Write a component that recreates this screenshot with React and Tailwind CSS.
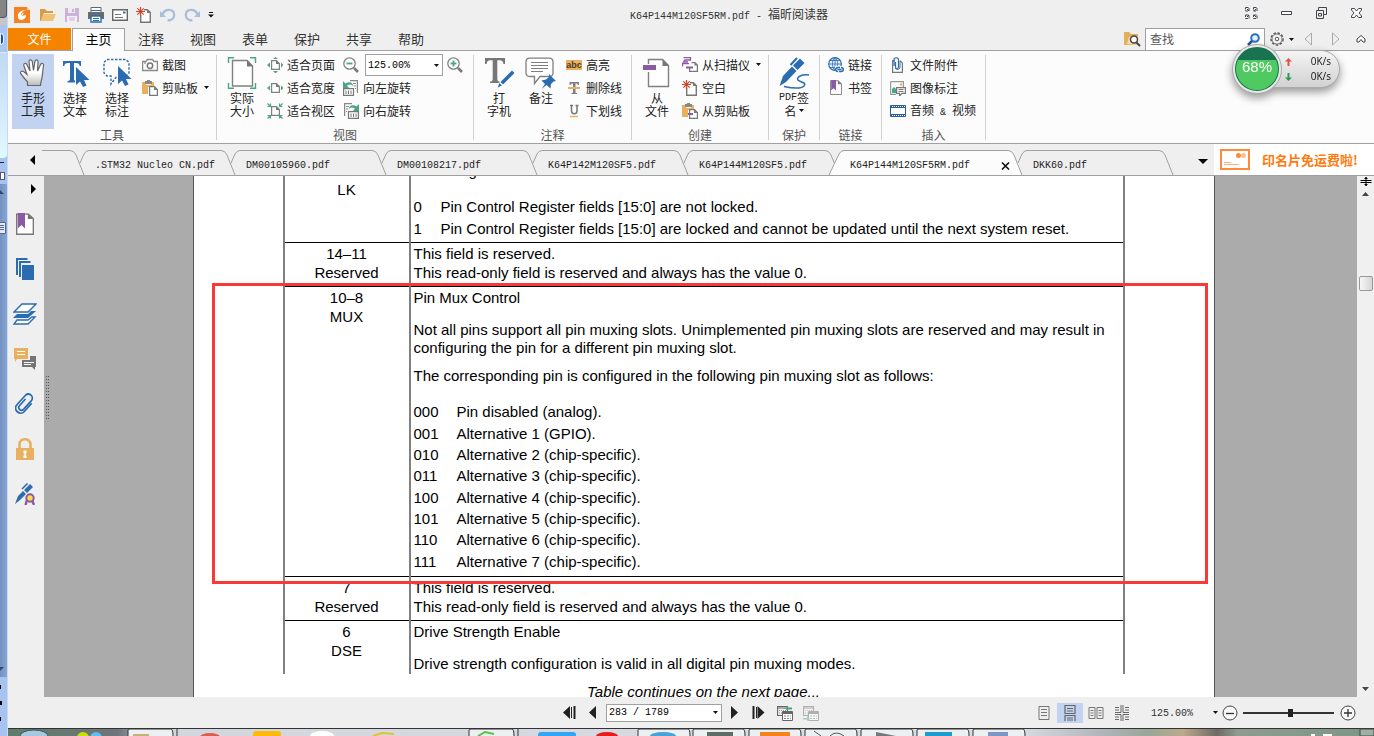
import { useState } from "react";

const BLUE = "#2b6cb0";
const GREY = "#757575";
const GREEN = "#4aa583";
const GOLD = "#e8b060";
const PURPLE = "#8a5aa5";

const Icon = ({ w = 16, h = 16, className = "", children }) => (
    <svg width={w} height={h} viewBox={`0 0 ${w} ${h}`} fill="none" className={`shrink-0 ${className}`} aria-hidden="true">
        {children}
    </svg>
);

const Latin = ({ children }) => (
    <span className="font-['Liberation_Mono',monospace] text-[10px] whitespace-pre">{children}</span>
);

const Caret = ({ className = "" }) => (
    <Icon w={5} h={3} className={className}>
        <path d="M0 0H5L2.5 3Z" fill="#111" />
    </Icon>
);

/* ---------- quick access icons ---------- */

const FoxitLogo = () => (
    <Icon className="mr-0.5">
        <path d="M0 0H13L16 3V16H0Z" fill="#f58220" />
        <path d="M13 0V3H16Z" fill="#fbd0a0" />
        <path d="M12 3C7 3 3 6 4 10C4 13 8 14 10 12C12 11 12 9 12 8L8 9L10 6C8 6 7 8 7 9C6 7 9 4 12 3Z" fill="#fff" />
    </Icon>
);

const FolderIcon = () => (
    <Icon>
        <path d="M0 14V2H5L7 4H13V6H4L1 14Z" fill="#d99b45" />
        <path d="M4 7H16L13 14H1Z" fill="#f2c172" />
    </Icon>
);

const SaveIcon = () => (
    <Icon>
        <path d="M1 1H15V15H1Z" fill="#c9b3d6" />
        <path d="M4 1H11V6H4Z" fill="#efe8f3" />
        <path d="M8 2H10V5H8Z" fill="#c9b3d6" />
        <path d="M3 9H13V15H3Z" fill="#f4eff7" />
        <path d="M5 11H11M5 13H11" stroke="#c9b3d6" />
    </Icon>
);

const PrintIcon = () => (
    <Icon>
        <path d="M3 5V0.5H13V5" stroke="#666" fill="#fff" />
        <path d="M0 5H16V12H13V9H3V12H0Z" fill="#6b6b6b" />
        <path d="M3 9H13V15H3Z" fill="#fff" stroke={BLUE} strokeWidth="1.4" />
        <path d="M5 11.5H11M5 13.5H11" stroke={BLUE} />
        <path d="M3 3.5H13" stroke={BLUE} />
    </Icon>
);

const MailIcon = () => (
    <Icon>
        <path d="M0.7 2.7H15.3V13.3H0.7Z" fill="#fff" stroke="#666" strokeWidth="1.4" />
        <path d="M11 4.5H13.5V6.5H11Z" fill={BLUE} />
        <path d="M3 7.5H9M3 10.5H11" stroke="#777" />
    </Icon>
);

const NewPageIcon = () => (
    <Icon>
        <path d="M4.7 4V15.3H14.3V5.5L11.3 2.7H8" fill="#fff" stroke="#777" strokeWidth="1.4" />
        <path d="M11 2.5V6H14.5Z" fill="#777" />
        <circle cx="4.5" cy="4.5" r="3.5" fill="#f3f0ef" />
        <path d="M4.5 0V9M0 4.5H9M1.3 1.3L7.7 7.7M7.7 1.3L1.3 7.7" stroke="#cc4a2c" strokeWidth="1.2" />
    </Icon>
);

const UndoIcon = ({ flip }) => (
    <Icon className={flip ? "-scale-x-100" : ""}>
        <path d="M2.5 7.5C4.5 1.5 14 1 14.2 8C14.2 11.5 11 13.5 7.5 13.5" stroke="#a8bfda" strokeWidth="2.3" />
        <path d="M0 4V10H6Z" fill="#a8bfda" />
    </Icon>
);

/* ---------- ribbon icons ---------- */

const HandIcon = () => (
    <Icon w={30} h={30}>
        <defs>
            <linearGradient id="palm" x1="0" y1="0" x2="0" y2="1">
                <stop offset="0.5" stopColor="#fff" />
                <stop offset="1" stopColor="#bbb" />
            </linearGradient>
        </defs>
        <path
            d="M9.500 28.500V25C6.500 22 4 18.500 2.500 16.200C2 14.700 3.800 13.500 5.500 14.600L9 17.500L5.800 8.500C5.200 6.400 7.800 5.600 8.800 7.500L12 14L11 4.500C11 2.400 13.700 2.200 14.200 4.200L15.500 13.500L17 4C17.500 2.200 20.100 2.600 20 4.600L19.500 14L22.700 7.300C23.600 5.600 26 6.500 25.500 8.500C24.700 13 24.500 18 24 21C23.700 23 22.500 25 22.500 28.500Z"
            fill="url(#palm)"
            stroke="#666"
            strokeWidth="1.200"
        />
    </Icon>
);

const Cursor = ({ x, y }) => (
    <path transform={`translate(${x} ${y})`} d="M0 0V18L4 14.500L7 20L10.500 18.500L8 13H13.500Z" fill={BLUE} />
);

const SelectTextIcon = () => (
    <Icon w={30} h={30}>
        <path d="M3 4H21V9H19.700C19.300 6.800 18.500 6 16.500 6H14V22C14 23.500 15 24 16.500 24.200V25.500H7.500V24.200C9 24 10 23.500 10 22V6H7.500C5.500 6 4.700 6.800 4.300 9H3Z" fill={BLUE} />
        <path d="M15 8L29 25L21 30L15 28Z" fill="#fcfcfc" />
        <Cursor x={16} y={10} />
    </Icon>
);

const SelectAnnotIcon = () => (
    <Icon w={30} h={30}>
        <path d="M5 2.500H24L27 5.500V16L24 19H15L9 27V19H5L2 16V5.500Z" stroke={BLUE} strokeWidth="1.400" strokeDasharray="2.500 1.500" />
        <path d="M15 7L30 23L22 30L15 27Z" fill="#fcfcfc" />
        <Cursor x={16} y={9} />
    </Icon>
);

const CameraIcon = () => (
    <Icon>
        <path d="M0.600 4.500H4L5.500 2.500H10.500L12 4.500H15.400V13.500H0.600Z" stroke="#8a8a8a" strokeWidth="1.300" />
        <circle cx="8" cy="8.700" r="2.700" stroke="#777" strokeWidth="1.500" />
        <path d="M2 6H4" stroke={GREY} />
    </Icon>
);

const ClipboardIcon = ({ purple }) => (
    <Icon>
        <path d="M0 2H4V5H9V2H12V7H6V14H0Z" fill={GOLD} />
        <path d="M3 1H5V0H8V1H10V4H3Z" fill="#888" />
        <path d="M7.600 6.600H12.500L15.400 9.500V15.400H7.600Z" fill="#fff" stroke="#777" strokeWidth="1.200" />
        <path d="M12 6.500V10H15.500Z" fill="#777" />
        {purple && <path d="M6 10H11V12H6Z" fill={PURPLE} />}
    </Icon>
);

const ActualSizeIcon = () => (
    <Icon w={30} h={32}>
        <path d="M1.500 6V0.700H7M23 0.700H28.500V6M28.500 26V31.300H23M7 31.300H1.500V26" stroke={GREEN} strokeWidth="1.400" />
        <path d="M5.500 3.500H20L25.500 9V29H5.500Z" fill="#fff" stroke="#808080" strokeWidth="1.400" />
        <path d="M20 3V9.500H26Z" fill="#777" />
    </Icon>
);

const FitIcon = ({ mode }) => (
    <Icon>
        <path d="M4.600 3.600H9.500L12.400 6.500V12.400H4.600Z" fill="#fff" stroke="#808080" strokeWidth="1.200" />
        <path d="M9 3.500V7H12.500Z" fill="#777" />
        {mode !== "area" && <path d="M3 5.500V10.500L0 8ZM14 5.500V10.500L16.500 8Z" fill={GREEN} />}
        {mode === "page" && <path d="M6 2H11L8.500 0ZM6 14H11L8.500 16.500Z" fill={GREEN} />}
        {mode === "area" && (
            <path d="M0.500 0.500L3 3M3.500 0.500V3.500H0.500M15.500 0.500L13 3M12.500 0.500V3.500H15.500M0.500 15.500L3 13M3.500 15.500V12.500H0.500M15.500 15.500L13 13M12.500 15.500V12.500H15.500" stroke={GREEN} strokeWidth="1.200" />
        )}
    </Icon>
);

const ZoomIcon = ({ plus }) => (
    <Icon>
        <circle cx="6.500" cy="6.500" r="5.700" fill="#fff" stroke="#808080" strokeWidth="1.300" />
        <path d="M11 11L15 15" stroke="#777" strokeWidth="2.500" />
        <path d="M3.500 6.500H9.500" stroke={GREEN} strokeWidth="1.800" />
        {plus && <path d="M6.500 3.500V9.500" stroke={GREEN} strokeWidth="1.800" />}
    </Icon>
);

const RotateIcon = ({ flip }) => (
    <Icon className={flip ? "-scale-x-100" : ""}>
        <path d="M7 0.600H14.400V13" stroke="#888" strokeWidth="1.200" />
        <path d="M10 3.500H13M11 6H13M12 8.500H13" stroke="#888" />
        <path d="M0.600 8.600H10.500V15.400H0.600Z" fill="#fff" stroke="#777" strokeWidth="1.200" />
        <path d="M3 10.500V14M5.500 10.500V14M8 10.500V14" stroke="#777" />
        <path d="M0 1V8H6L4 5.500C7 3.500 9 4.500 10.500 6.500C10 2.500 6 1 2.500 3.500Z" fill={GREEN} />
    </Icon>
);

const TypewriterIcon = () => (
    <Icon w={32} h={32}>
        <path d="M2 1H22V7H20.500C20 4.500 19 3.300 17 3.300H14.300V22C14.300 24 15.500 24.500 17 24.700V26H7V24.700C8.500 24.500 9.700 24 9.700 22V3.300H7C5 3.300 4 4.500 3.500 7H2Z" fill="#777" />
        <path d="M29 13L32 16L20 28L14.500 31L16.500 25Z" fill="#fcfcfc" />
        <path d="M29 13.500L31.500 16L20 27.500L17.500 25ZM16.500 26L19 28.500L14.500 30.500Z" fill={BLUE} />
    </Icon>
);

const NoteIcon = () => (
    <Icon w={32} h={32}>
        <path d="M5 1.200H24Q28 1.200 28 5V16Q28 19.500 24 19.500H15L9.500 26.500V19.500H5Q1 19.500 1 16V5Q1 1.200 5 1.200Z" fill="#fff" stroke="#808080" strokeWidth="1.300" />
        <path d="M6 5.500H23M6 8.500H23M6 11.500H23M6 14.500H18" stroke="#808080" />
        <path d="M24 17L31 24L28.500 24.500L26 27L25.500 31.500L21.500 28L16.500 32L20 27L16.500 23.500L21 22.500L24 20Z" fill={BLUE} />
    </Icon>
);

const HighlightIcon = () => (
    <Icon>
        <path d="M0 3H16V13H0Z" fill={GOLD} />
        <text x="8" y="11" textAnchor="middle" fontSize="9" fontWeight="700" fontFamily="Liberation Sans, sans-serif" fill="#4a3d28">abc</text>
    </Icon>
);

const StrikeIcon = () => (
    <Icon>
        <path d="M3.500 2H13V5H12C11.500 3.500 11 3.500 9.500 3.500V12C9.500 13 10 13 11 13V14H5.500V13C6.500 13 7 13 7 12V3.500C5.500 3.500 5 3.500 4.500 5H3.500Z" fill="#808080" />
        <path d="M2 7H14V9H2Z" fill={GOLD} />
    </Icon>
);

const UnderlineIcon = () => (
    <Icon>
        <path d="M4 2.500H7M9.500 2.500H12.500M5.500 2.500V8C5.500 11.500 11 11.500 11 8V2.500" stroke="#777" strokeWidth="1.500" />
        <path d="M4 13.500H12" stroke={GOLD} strokeWidth="1.500" />
    </Icon>
);

const FromFileIcon = () => (
    <Icon w={28} h={32}>
        <path d="M5.500 2.500H19.500L25.500 8.500V29.500H5.500Z" fill="#fff" stroke="#808080" strokeWidth="1.400" />
        <path d="M19.500 2V9H26Z" fill="#777" />
        <path d="M4 7H14V15H4Z" fill="#fcfcfc" />
        <path d="M0 8H13V13H0Z" fill={PURPLE} />
    </Icon>
);

const ScannerIcon = () => (
    <Icon>
        <path d="M9.600 5.600H13L15.400 8V14.400H7.600V10" stroke="#777" strokeWidth="1.200" />
        <path d="M12.500 5.500V8.500H15.500Z" fill="#777" />
        <path d="M1.500 0.700H8.500V3H3L1.500 5H6M0.500 9.500V6.700H7" stroke={PURPLE} strokeWidth="1.300" />
        <path d="M4 9.500H11V11.500H4Z" fill={PURPLE} />
    </Icon>
);

const SignIcon = () => (
    <Icon w={32} h={32}>
        <path d="M22 1.500L26.500 6L19.500 13L15 8.500ZM14 9.500L18.500 14L8 25L1.500 29L5 19Z" fill={BLUE} />
        <path d="M12.500 8L19 1" stroke={BLUE} strokeWidth="2" />
        <path d="M31 18C24 17 18 20 20 23C22 25.500 29 25 26 29C23 32 13 31 6 29.500" stroke={BLUE} strokeWidth="1.500" />
    </Icon>
);

const GlobeLinkIcon = () => (
    <Icon>
        <circle cx="7" cy="7" r="6.300" stroke={BLUE} strokeWidth="1.200" fill="#eaf2fa" />
        <path d="M0.500 7H13.500M7 0.500V13.500M2 3.500H12M2 10.500H12M7 0.500C3.500 4 3.500 10 7 13.500M7 0.500C10.500 4 10.500 10 7 13.500" stroke={BLUE} strokeWidth="0.800" />
        <path d="M7 9H16V16H7Z" fill="#fcfcfc" />
        <path d="M10 14.500C7 14.500 7 10.500 10 10.500H12M13 10.500C16 10.500 16 14.500 13 14.500H11M9.500 12.500H13.500" stroke={BLUE} strokeWidth="1.500" />
    </Icon>
);

const BookmarkPageIcon = ({ w = 16, h = 16 }) => (
    <svg width={w} height={h} viewBox="0 0 16 20" fill="none" preserveAspectRatio="none" aria-hidden="true">
        <path d="M0.600 1H11L15.400 5V19.300H0.600Z" fill="#fff" stroke="#777" strokeWidth="1.200" />
        <path d="M10.500 0.500V5.500H15.800Z" fill="#777" />
        <path d="M1.500 0H8V14L4.800 11L1.500 14Z" fill={PURPLE} />
    </svg>
);

const AttachIcon = () => (
    <Icon>
        <path d="M5 3.600H2.600V15.400H12.400V6L10 3.600" fill="#fff" stroke="#777" strokeWidth="1.200" />
        <path d="M5.500 5V10C5.500 12 8.500 12 8.500 10V3C8.500 0 4 0 4 3V9" stroke={BLUE} strokeWidth="1.200" />
        <path d="M10 4V10C10 13 6 13 5 11" stroke={BLUE} />
    </Icon>
);

const ImageAnnotIcon = () => (
    <Icon>
        <path d="M0.600 1.600H13.400V7M6 14.400H0.600V1.600" stroke="#999" strokeWidth="1.200" />
        <path d="M2 13V9L4 7L7 10V13Z" fill={GREEN} />
        <circle cx="11" cy="4.500" r="1.200" fill={GOLD} />
        <path d="M6.600 7.600H15.400V13.400H12L9.500 16V13.400H6.600Z" fill="#fff" stroke="#777" strokeWidth="1.200" />
        <path d="M8.500 9.500H13.500M8.500 11.500H13.500" stroke="#777" />
    </Icon>
);

const FilmIcon = () => (
    <Icon>
        <path d="M0.500 2.500H15.500V13.500H0.500Z" fill="#fff" stroke="#2a5f9e" />
        <path d="M1 3.500H15M1 12.500H15" stroke="#2a5f9e" strokeDasharray="1 1" />
        <path d="M1 4.500H15M1 11.500H15" stroke="#2a5f9e" />
    </Icon>
);

/* ---------- title bar ---------- */

const quickIcons = [
    ["打开", <FolderIcon />],
    ["保存", <SaveIcon />],
    ["打印", <PrintIcon />],
    ["邮件", <MailIcon />],
    ["新建", <NewPageIcon />],
    ["撤销", <UndoIcon />],
    ["重做", <UndoIcon flip />],
];

const TitleBar = () => (
    <header className="flex h-7 shrink-0 items-center pt-0.5 pr-2.5 pl-1.5">
        <div className="flex flex-1 items-center gap-2">
            <FoxitLogo />
            {quickIcons.map(([label, icon]) => (
                <button key={label} aria-label={label}>{icon}</button>
            ))}
            <button aria-label="自定义快速访问工具栏">
                <Icon w={6} h={6}>
                    <path d="M1 0.500H5" stroke="#111" />
                    <path d="M0 2.500H6L3 5.500Z" fill="#111" />
                </Icon>
            </button>
        </div>
        <h1 className="pb-0.5 pl-20 text-[12px] whitespace-nowrap text-[#333]">
            <Latin>K64P144M120SF5RM.pdf - </Latin>福昕阅读器
        </h1>
        <div className="flex flex-1 justify-end gap-5 pb-1">
            <button aria-label="全屏">
                <Icon w={15} h={14}>
                    <path d="M1.500 1.500H5V5H1.500ZM9.500 1.500H13V5H9.500ZM1.500 9H5V12.500H1.500ZM9.500 9H13V12.500H9.500Z" stroke="#44444f" strokeDasharray="3 1" />
                    <path d="M3 3L5 5M12 3L10 5M3 11L5 9M12 11L10 9" stroke="#44444f" />
                </Icon>
            </button>
            <button aria-label="最小化">
                <Icon w={15} h={14}>
                    <path d="M2.500 5.500H12.500V8.500H2.500Z" stroke="#44444f" fill="#fff" />
                </Icon>
            </button>
            <button aria-label="还原">
                <Icon w={15} h={14}>
                    <path d="M4.500 4V1.500H12.500V8.500H10M2.500 4.500H9.500V12.500H2.500ZM4.500 7.500H7.500V10H4.500Z" stroke="#44444f" />
                </Icon>
            </button>
            <button aria-label="关闭">
                <Icon w={15} h={14}>
                    <path d="M2.500 2.500H5.500L7.500 5L9.500 2.500H12.500V4L10 7L12.500 10V11.500H9.500L7.500 9L5.500 11.500H2.500V10L5 7L2.500 4Z" stroke="#44444f" fill="#fff" />
                </Icon>
            </button>
        </div>
    </header>
);

const menuTabs = ["注释", "视图", "表单", "保护", "共享", "帮助"];

const MenuBar = () => (
    <nav className="flex h-[23px] shrink-0 items-stretch border-b border-[#a0a0a0]">
        <button className="w-[63px] bg-[#f48400] text-[12px] text-white">文件</button>
        <button className="-mb-px ml-px w-[53px] border border-b-0 border-[#a0a0a0] bg-[#fcfcfc] pb-0.5 text-[13px] leading-5 text-black">主页</button>
        {menuTabs.map((tab) => (
            <button key={tab} className="w-[52px] text-[13px] text-[#333]">{tab}</button>
        ))}
        <div className="ml-auto flex items-center">
            <Icon w={17} className="mr-1">
                <path d="M0 14V1H5L7 3H14V14Z" fill="#e5b05c" />
                <path d="M3 13L5 6H14V14Z" fill="#f7dca8" />
                <circle cx="10" cy="8.500" r="3.500" fill="#fff" stroke="#444" strokeWidth="1.500" />
                <path d="M12.500 11.500L16 15" stroke="#444" strokeWidth="2" />
            </Icon>
            <label className="flex h-[23px] w-[120px] items-center border border-[#a0a0a0] bg-white px-1">
                <input className="w-full min-w-0 bg-transparent text-[12px] text-[#333] outline-none placeholder:text-[#555]" placeholder="查找" aria-label="查找" />
                <Icon w={13} h={13}>
                    <circle cx="8" cy="5" r="3.800" fill="#e3f0fc" stroke="#2c6fc0" strokeWidth="2" />
                    <path d="M5 8L1 12" stroke="#254f9c" strokeWidth="2.500" />
                </Icon>
            </label>
            <button className="ml-1 flex items-center gap-1" aria-label="设置">
                <Icon>
                    <circle cx="8" cy="8" r="6" stroke="#555" strokeWidth="1.500" strokeDasharray="2.500 1.500" />
                    <circle cx="8" cy="8" r="5" stroke="#777" fill="#f5f5f5" />
                    <circle cx="8" cy="8" r="1.800" stroke="#555" />
                </Icon>
                <Caret />
            </button>
            <button className="ml-2.5" aria-label="上一个">
                <Icon w={8} h={14}><path d="M7.500 1V13L1 7Z" stroke="#aaa" /></Icon>
            </button>
            <button className="ml-5" aria-label="下一个">
                <Icon w={8} h={14}><path d="M0.500 1V13L7 7Z" stroke="#aaa" /></Icon>
            </button>
            <button className="mr-2 ml-4" aria-label="折叠功能区">
                <Icon w={10} h={10}><path d="M1 5L5 1.500L9 5V8H7L5 5.500L3 8H1Z" stroke="#444" fill="#fff" /></Icon>
            </button>
        </div>
    </nav>
);

/* ---------- ribbon ---------- */

const Group = ({ label, className, wide, children }) => (
    <section className={`flex h-[85px] flex-col border-r border-[#d0d0d0] ${className}`}>
        <div className={`-mt-px flex h-[75px] shrink-0 ${wide ? "pl-2" : "pl-1"}`}>{children}</div>
        <h2 className="text-center text-[12px] leading-3 text-[#555]">{label}</h2>
    </section>
);

const BigButton = ({ icon, lines, className = "" }) => (
    <button className={`flex h-[75px] w-[42px] shrink-0 flex-col items-center pt-[3px] text-[12px] leading-[13px] ${className}`}>
        <span className="flex h-[34px] items-start">{icon}</span>
        {lines.map((line, i) => (
            <span key={i} className="flex items-center whitespace-nowrap">{line}</span>
        ))}
    </button>
);

const SmallButton = ({ icon, children, caret }) => (
    <button className="flex h-[23px] items-center gap-1 pb-0.5 text-[12px] whitespace-nowrap">
        {icon}
        <span>{children}</span>
        {caret && <Caret className="ml-0.5" />}
    </button>
);

const Ribbon = () => (
    <div className="flex h-[93px] shrink-0 items-start border-b border-[#a0a0a0] bg-[#fcfcfc] pt-1">
        <Group label="工具" className="w-[209px]">
            <BigButton icon={<HandIcon />} lines={["手形", "工具"]} className="bg-[#c1d3f1]" />
            <BigButton icon={<SelectTextIcon />} lines={["选择", "文本"]} />
            <BigButton icon={<SelectAnnotIcon />} lines={["选择", "标注"]} />
            <div className="ml-1">
                <SmallButton icon={<CameraIcon />}>截图</SmallButton>
                <SmallButton icon={<ClipboardIcon />} caret>剪贴板</SmallButton>
            </div>
        </Group>
        <Group label="视图" className="w-[257px]">
            <BigButton icon={<ActualSizeIcon />} lines={["实际", "大小"]} />
            <div className="ml-1">
                <SmallButton icon={<FitIcon mode="page" />}>适合页面</SmallButton>
                <SmallButton icon={<FitIcon />}>适合宽度</SmallButton>
                <SmallButton icon={<FitIcon mode="area" />}>适合视区</SmallButton>
            </div>
            <div className="ml-2">
                <div className="flex h-[23px] items-center pb-px">
                    <button aria-label="缩小"><ZoomIcon /></button>
                    <div className="relative ml-1.5 flex items-center">
                        <select aria-label="缩放比例" className="h-[22px] w-[78px] appearance-none border border-[#a0a0a0] bg-white px-0.5 font-['Liberation_Mono',monospace] text-[10px] text-black">
                            <option>125.00%</option>
                        </select>
                        <Caret className="pointer-events-none absolute right-1" />
                    </div>
                    <button className="ml-1" aria-label="放大"><ZoomIcon plus /></button>
                </div>
                <SmallButton icon={<RotateIcon />}>向左旋转</SmallButton>
                <SmallButton icon={<RotateIcon flip />}>向右旋转</SmallButton>
            </div>
        </Group>
        <Group label="注释" className="w-[158px]">
            <BigButton icon={<TypewriterIcon />} lines={["打", "字机"]} />
            <BigButton icon={<NoteIcon />} lines={["备注"]} />
            <div className="ml-1">
                <SmallButton icon={<HighlightIcon />}>高亮</SmallButton>
                <SmallButton icon={<StrikeIcon />}>删除线</SmallButton>
                <SmallButton icon={<UnderlineIcon />}>下划线</SmallButton>
            </div>
        </Group>
        <Group label="创建" className="w-[137px]">
            <BigButton icon={<FromFileIcon />} lines={["从", "文件"]} />
            <div className="ml-1">
                <SmallButton icon={<ScannerIcon />} caret>从扫描仪</SmallButton>
                <SmallButton icon={<NewPageIcon />}>空白</SmallButton>
                <SmallButton icon={<ClipboardIcon purple />}>从剪贴板</SmallButton>
            </div>
        </Group>
        <Group label="保护" className="w-[51px]">
            <BigButton
                icon={<SignIcon />}
                lines={[<><Latin>PDF</Latin>签</>, <>名<Caret className="ml-0.5" /></>]}
            />
        </Group>
        <Group label="链接" className="w-[62px]" wide>
            <div>
                <SmallButton icon={<GlobeLinkIcon />}>链接</SmallButton>
                <SmallButton icon={<span className="flex w-4 justify-center"><BookmarkPageIcon w={12} h={15} /></span>}>书签</SmallButton>
            </div>
        </Group>
        <Group label="插入" className="w-[104px]" wide>
            <div>
                <SmallButton icon={<AttachIcon />}>文件附件</SmallButton>
                <SmallButton icon={<ImageAnnotIcon />}>图像标注</SmallButton>
                <SmallButton icon={<FilmIcon />}>音频<Latin> &amp; </Latin>视频</SmallButton>
            </div>
        </Group>
    </div>
);

/* ---------- document tabs ---------- */

const docs = [
    ".STM32 Nucleo CN.pdf",
    "DM00105960.pdf",
    "DM00108217.pdf",
    "K64P142M120SF5.pdf",
    "K64P144M120SF5.pdf",
    "K64P144M120SF5RM.pdf",
    "DKK60.pdf",
];

const DocTab = ({ name, active, onSelect }) => {
    const w = active ? 183 : 151;
    return (
        <div className={`relative flex h-[25px] shrink-0 items-center ${active ? "z-10 w-[183px]" : "w-[151px]"}`}>
            <svg width={w + 5} height="25" className="absolute top-0 left-0 overflow-visible" fill="none" aria-hidden="true">
                <path
                    d={`M${active ? "-6 25L4 4" : "0 13L4 4"}Q6 0.500 9 0.500H${w - 10}Q${w - 6} 0.500 ${w - 4} 5L${w + 4} 25`}
                    stroke="#a0a0a0"
                    fill={active ? "#fcfcfc" : "none"}
                />
            </svg>
            <button onClick={onSelect} className="relative flex-1 pt-0.5 pl-[15px] text-left text-[#222]">
                <Latin>{name}</Latin>
            </button>
            {active && (
                <button className="relative mr-2 pt-1.5" aria-label="关闭标签">
                    <Icon w={9} h={8}><path d="M1 0.500L8 7.500M8 0.500L1 7.500" stroke="#111" strokeWidth="1.600" /></Icon>
                </button>
            )}
        </div>
    );
};

const DocTabs = () => {
    const [current, setCurrent] = useState(5);
    return (
        <div className="flex h-8 shrink-0 border-b border-[#a0a0a0]">
            <button className="flex w-[34px] items-center justify-end pr-[7px]" aria-label="向左滚动">
                <Icon w={5} h={10}><path d="M5 0V10L0 5Z" fill="#000" /></Icon>
            </button>
            <div className="flex min-w-0 flex-1 items-end overflow-hidden">
                <svg width="38" height="25" className="shrink-0 overflow-visible" fill="none" aria-hidden="true">
                    <path d="M0 0.500H28Q32 0.500 34 5L42 25" stroke="#a0a0a0" />
                </svg>
                {docs.map((name, i) => (
                    <DocTab key={name} name={name} active={i === current} onSelect={() => setCurrent(i)} />
                ))}
            </div>
            <button className="flex w-5 items-center" aria-label="所有标签">
                <Icon w={10} h={5} className="mt-1 ml-1"><path d="M0 0H10L5 5Z" fill="#000" /></Icon>
            </button>
            <a href="#card" className="flex w-[160px] shrink-0 items-center gap-3 bg-white pl-1.5 text-[13px] font-bold whitespace-nowrap text-[#ff7a0d]">
                <Icon w={30} h={21}>
                    <path d="M1 1H29V20H1Z" stroke="#ff8a3c" strokeWidth="2" />
                    <circle cx="18.500" cy="6.500" r="2.500" fill="#ff8a3c" />
                    <circle cx="23.500" cy="6.500" r="2.500" fill="#ffbf91" />
                    <path d="M4 13.500H11M4 15.500H19" stroke="#ffb27c" />
                </Icon>
                印名片免运费啦!
            </a>
        </div>
    );
};

/* ---------- left panel ---------- */

const panelIcons = [
    ["书签", <BookmarkPageIcon w={18} h={22} />],
    [
        "页面",
        <Icon w={20} h={22}>
            <path d="M2 17V1H12.500M5 19V4H15.500" stroke={BLUE} strokeWidth="2" />
            <path d="M7 7H19V22H7Z" fill={BLUE} />
        </Icon>,
    ],
    [
        "图层",
        <Icon w={24} h={22}>
            <path d="M9 1H23L15 9H1Z" fill="#fff" stroke={BLUE} strokeWidth="1.400" />
            <path d="M18 8H23L15 15H0L4 11H15Z" fill={BLUE} />
            <path d="M4 17L1 21H15L22 14H19L15 17Z" fill="#fff" stroke={BLUE} strokeWidth="1.400" />
        </Icon>,
    ],
    [
        "注释",
        <Icon w={22} h={22}>
            <path d="M0 0H14V11H3L1 14V11H0Z" fill={GOLD} />
            <path d="M3 3.500H11M3 6.500H11" stroke="#fff" />
            <path d="M16 8H22V19H21V22L18 19H8V12H16Z" fill="#757575" />
            <path d="M10 14.500H20M10 16.500H17" stroke="#fff" />
        </Icon>,
    ],
    [
        "附件",
        <Icon w={20} h={22}>
            <g transform="rotate(42 10 11)" stroke={BLUE} strokeWidth="1.700">
                <path d="M7 7V16C7 19.500 12.500 19.500 12.500 16V4.500C12.500 -1 4.500 -1 4.500 4.500V17C4.500 23.500 14.500 23.500 14.500 17V6" />
            </g>
        </Icon>,
    ],
    [
        "安全",
        <Icon w={18} h={22}>
            <path d="M3.500 11V6.500C3.500 -0.500 14.500 -0.500 14.500 6.500V11" stroke={GOLD} strokeWidth="2.600" />
            <path d="M0 10H18V22H0Z" fill={GOLD} />
            <path d="M7.500 12.500H10.500V15.500H9.800V17.500H10.500V20H7.500V17.500H8.200V15.500H7.500Z" fill="#fff" />
        </Icon>,
    ],
    [
        "签名",
        <Icon w={20} h={22}>
            <path d="M15 1L18 4L12 10L9 7ZM8 8L11 11L5 17L0 21L3 13Z" fill={BLUE} />
            <path d="M7 6L12.500 0.500" stroke={BLUE} strokeWidth="1.600" />
            <path d="M12 17L10.500 22M17 17L19 22" stroke={PURPLE} strokeWidth="2.500" />
            <circle cx="15" cy="15" r="3.700" fill="#ffd84d" stroke={PURPLE} strokeWidth="2" />
        </Icon>,
    ],
];

const SidePanel = () => (
    <aside className="flex w-9 shrink-0 flex-col">
        <button className="flex h-[25px] items-center justify-end pr-2" aria-label="展开面板">
            <Icon w={5} h={10}><path d="M0 0V10L5 5Z" fill="#000" /></Icon>
        </button>
        {panelIcons.map(([label, icon]) => (
            <button key={label} aria-label={label} className="flex h-[45px] items-center justify-center pr-0.5">
                {icon}
            </button>
        ))}
    </aside>
);

/* ---------- pdf page ---------- */

const muxSlots = [
    ["000", "Pin disabled (analog)."],
    ["001", "Alternative 1 (GPIO)."],
    ["010", "Alternative 2 (chip-specific)."],
    ["011", "Alternative 3 (chip-specific)."],
    ["100", "Alternative 4 (chip-specific)."],
    ["101", "Alternative 5 (chip-specific)."],
    ["110", "Alternative 6 (chip-specific)."],
    ["111", "Alternative 7 (chip-specific)."],
];

const Row = ({ bits, name, last, children }) => (
    <tr className={last ? "" : "border-b border-black"}>
        <th className="w-[126px] border-x-2 border-[#808080] p-0 pt-px text-center align-top font-normal">
            {bits}
            <br />
            {name}
        </th>
        <td className="border-r-2 border-[#808080] p-0 pt-px pl-[3px] align-top">{children}</td>
    </tr>
);

const Reserved = () => (
    <p className="pb-1">
        This field is reserved.
        <br />
        This read-only field is reserved and always has the value 0.
    </p>
);

const PdfPage = () => (
    <div className="relative w-[1022px] shrink-0 overflow-hidden border-x border-[#555] bg-white px-[89px] font-['Liberation_Sans',sans-serif] text-[15px] leading-[19px] text-black">
        <table className="-mt-4 w-full border-collapse">
            <tbody>
                <Row bits="15" name="LK">
                    <p>Lock Register</p>
                    <dl className="mt-4 grid grid-cols-[27px_1fr] pb-0.5 leading-[22px]">
                        <dt>0</dt>
                        <dd>Pin Control Register fields [15:0] are not locked.</dd>
                        <dt>1</dt>
                        <dd>Pin Control Register fields [15:0] are locked and cannot be updated until the next system reset.</dd>
                    </dl>
                </Row>
                <Row bits="14–11" name="Reserved"><Reserved /></Row>
                <Row bits="10–8" name="MUX">
                    <p>Pin Mux Control</p>
                    <p className="mt-3.5 leading-[18px]">
                        Not all pins support all pin muxing slots. Unimplemented pin muxing slots are reserved and may result in
                        configuring the pin for a different pin muxing slot.
                    </p>
                    <p className="mt-[9px]">The corresponding pin is configured in the following pin muxing slot as follows:</p>
                    <dl className="mt-4 mb-1 grid h-[171px] auto-rows-fr grid-cols-[43px_1fr] items-center">
                        {muxSlots.map(([code, text]) => (
                            <div key={code} className="contents">
                                <dt>{code}</dt>
                                <dd>{text}</dd>
                            </div>
                        ))}
                    </dl>
                </Row>
                <Row bits="7" name="Reserved"><Reserved /></Row>
                <Row bits="6" name="DSE" last>
                    <p>Drive Strength Enable</p>
                    <p className="mt-[13px] pb-px">Drive strength configuration is valid in all digital pin muxing modes.</p>
                </Row>
            </tbody>
        </table>
        <p className="mt-2 text-center italic">Table continues on the next page...</p>
        <div className="absolute top-[107px] right-1.5 left-[18px] h-[301px] border-3 border-[#f93838]" />
    </div>
);

const Scrollbar = () => (
    <div className="flex w-[17px] shrink-0 flex-col items-center bg-[#f0f0f0] pt-px pb-1.5">
        <Icon w={12} h={9}>
            <path d="M0.500 3.500H11.500M0.500 5.500H11.500M6 0V9" stroke="#000" />
            <path d="M4 2H8L6 0ZM4 7H8L6 9Z" fill="#000" />
        </Icon>
        <Icon w={7} h={4} className="mt-1.5"><path d="M0 4H7L3.500 0Z" fill="#444" /></Icon>
        <div className="mt-20 h-[15px] w-3.5 rounded-xs border border-[#999] bg-linear-to-r from-[#f8f8f8] to-[#d5d5d5]" />
        <Icon w={7} h={4} className="mt-auto"><path d="M0 0H7L3.500 4Z" fill="#444" /></Icon>
    </div>
);

/* ---------- status bar ---------- */

const NavArrow = ({ label, d, w = 8 }) => (
    <button aria-label={label}>
        <Icon w={w} h={13}><path d={d} fill="#222" /></Icon>
    </button>
);

const ViewHistoryIcon = ({ faded }) => (
    <Icon className={faded ? "opacity-45" : ""}>
        <path d="M0.500 1.500H10.500V10.500H0.500ZM0.500 3H10" stroke="#666" strokeWidth="1.200" />
        <path d="M2 5.500H9M2 8H6" stroke="#999" strokeDasharray="1 1" />
        <path d="M5.500 6.500H15.500V15.500H5.500Z" fill="#fff" stroke="#666" />
        <path d="M5.500 8H15.500" stroke="#666" strokeWidth="2" />
        <path d="M7 11H14M7 13.500H14" stroke="#888" strokeDasharray="2 1" />
        {faded ? <path d="M0 13H4V11L7 14L4 16V14.500H0Z" fill={GREEN} /> : <path d="M15 2.500H11V0.500L8 3.500L11 6V4.500H15Z" fill={GREEN} />}
    </Icon>
);

const layoutIcons = [
    ["单页", <path d="M3 1.500H13V14.500H3ZM5 4.500H11M5 7.500H11M5 10.500H11" stroke="#777" />],
    ["连续", <path d="M3 0V8.500H13V0.500H3M5 3.500H11M5 6H11M3 16V10.500H13V16M5 13H11M5 15H11" stroke="#666" strokeWidth="1.200" />],
    ["双页", <path d="M1 2.500H7V13.500H1ZM9 2.500H15V13.500H9ZM2.500 5.500H5.500M2.500 8H5.500M2.500 10.500H5.500M10.500 5.500H13.500M10.500 8H13.500M10.500 10.500H13.500" stroke="#777" />],
    ["连续双页", <path d="M1 7.500H7V0M9 0V7.500H15M1 9.500H7V16M9 16V9.500H15M1 2.500H5M1 5H5M11 2.500H15M11 5H15M1 12H5M1 14.500H5M11 12H15M11 14.500H15" stroke="#666" />],
];

const StatusBar = () => {
    const [zoom, setZoom] = useState(52);
    return (
        <footer className="grid h-[31px] shrink-0 grid-cols-[1fr_auto_1fr] items-center">
            <span />
            <div className="flex items-center">
                <NavArrow label="第一页" w={13} d="M7 0V13L0 6.500ZM8 1L8 12L9 12V1ZM10.500 0H12.500V13H10.500Z" />
                <span className="w-3" />
                <NavArrow label="上一页" d="M8 0V13L1 6.500Z" />
                <div className="relative mr-2 ml-2.5 flex items-center">
                    <select aria-label="页码" className="h-[18px] w-[116px] appearance-none border border-[#a0a0a0] bg-white px-0.5 font-['Liberation_Mono',monospace] text-[10px] text-black">
                        <option>283 / 1789</option>
                    </select>
                    <Caret className="pointer-events-none absolute right-1" />
                </div>
                <NavArrow label="下一页" d="M1 0V13L8 6.500Z" />
                <span className="w-3.5" />
                <NavArrow label="最后一页" w={13} d="M0.500 0H2.500V13H0.500ZM4 1H5V12H4ZM5.500 0V13L12.500 6.500Z" />
                <button className="ml-3" aria-label="上一视图"><ViewHistoryIcon /></button>
                <button className="ml-2.5" aria-label="下一视图"><ViewHistoryIcon faded /></button>
            </div>
            <div className="flex items-center justify-end pr-[18px]">
                {layoutIcons.map(([label, shape], i) => (
                    <button
                        key={label}
                        aria-label={label}
                        className={`flex h-5 w-[26px] items-center justify-center ${i === 1 ? "bg-[#c1d3f1]" : ""}`}
                    >
                        <Icon>{shape}</Icon>
                    </button>
                ))}
                <span className="ml-4 pb-0.5 text-[#333]"><Latin>125.00%</Latin></span>
                <Caret className="mr-1 ml-5" />
                <button aria-label="缩小">
                    <Icon>
                        <circle cx="8" cy="8" r="7" stroke="#444" fill="#f7f7f7" />
                        <path d="M4 8.500H12" stroke="#333" strokeWidth="1.300" />
                    </Icon>
                </button>
                <input
                    type="range"
                    aria-label="缩放"
                    value={zoom}
                    onChange={(e) => setZoom(Number(e.target.value))}
                    className="mr-1.5 ml-[5px] h-4 w-[91px] appearance-none bg-transparent [&::-webkit-slider-runnable-track]:h-0.5 [&::-webkit-slider-runnable-track]:bg-[#333] [&::-webkit-slider-thumb]:-mt-[3px] [&::-webkit-slider-thumb]:h-2 [&::-webkit-slider-thumb]:w-[5px] [&::-webkit-slider-thumb]:appearance-none [&::-webkit-slider-thumb]:bg-[#222]"
                />
                <button aria-label="放大">
                    <Icon>
                        <circle cx="8" cy="8" r="7" stroke="#444" fill="#f7f7f7" />
                        <path d="M4 8H12M8 4V12" stroke="#333" strokeWidth="1.300" />
                    </Icon>
                </button>
            </div>
        </footer>
    );
};

const Taskbar = () => (
    <svg viewBox="0 0 1366 8" preserveAspectRatio="none" className="h-2 w-full shrink-0" aria-hidden="true">
        <defs>
            <linearGradient id="bar">
                <stop offset="0" stopColor="#5f7d68" />
                <stop offset="0.080" stopColor="#70747c" />
                <stop offset="0.120" stopColor="#d3d6dc" />
                <stop offset="0.740" stopColor="#d9dde3" />
                <stop offset="0.800" stopColor="#b2b5b9" />
                <stop offset="0.835" stopColor="#9aa698" />
                <stop offset="0.860" stopColor="#bda98a" />
                <stop offset="0.885" stopColor="#6f6a66" />
                <stop offset="0.900" stopColor="#8d9c8e" />
                <stop offset="1" stopColor="#7d9688" />
            </linearGradient>
        </defs>
        <rect width="1366" height="8" fill="url(#bar)" />
        {[120, 461].map((x) => (
            <path key={x} d={`M${x} 8V2Q${x} 1 ${x + 2} 1H${x + 43}Q${x + 45} 1 ${x + 45} 8M${x + 49} 1V8`} fill="#edf0f3" stroke="#333" />
        ))}
        {[630, 685, 741, 797, 853, 909, 965].map((x) => (
            <path key={x} d={`M${x} 8V2Q${x} 1 ${x + 2} 1H${x + 50}Q${x + 52} 1 ${x + 52} 8`} fill="#edf0f3" stroke="#333" />
        ))}
        <ellipse cx="26" cy="8" rx="14" ry="6" fill="#a9c8dc" stroke="#31576f" />
        <circle cx="75" cy="10" r="6" fill="#c9e000" />
        <circle cx="88" cy="10" r="6" fill="#5cc0f2" />
        <rect x="125" y="6" width="16" height="2" fill="#c8b078" />
        <ellipse cx="202" cy="9" rx="10" ry="4" fill="#d9604f" />
        <rect x="245" y="3" width="28" height="8" rx="3" fill="#ffba08" />
        <ellipse cx="314" cy="8" rx="12" ry="5" fill="#fff" />
        <path d="M365 8L374 5L386 6" stroke="#e7bf35" strokeWidth="2" fill="none" />
        <path d="M470 8L477 4L486 6" stroke="#5cc247" strokeWidth="2" fill="none" />
        <rect x="530" y="4" width="38" height="6" rx="3" fill="#32a6f4" />
        <ellipse cx="599" cy="8" rx="11" ry="4" fill="#e81c1c" />
        <ellipse cx="655" cy="8" rx="13" ry="4" fill="#4aa3d8" />
        <rect x="699" y="4" width="26" height="4" fill="#5d6f65" />
        <rect x="752" y="4" width="30" height="4" fill="#f5841f" />
        <path d="M806 3L813 8M822 8Q828 2 836 8" stroke="#555" fill="none" />
        <path d="M868 4L888 8H868Z" fill="#777" />
        <rect x="917" y="4" width="27" height="4" fill="#1e9bd1" />
        <rect x="980" y="4" width="20" height="4" fill="#7d96c4" />
        <path d="M0 0.500H1366" stroke="#333" />
        <path d="M1303 7H1307M1315 7H1324" stroke="#fff" strokeWidth="2" />
        <rect x="1352" y="1" width="14" height="7" fill="#9fb0a6" stroke="#444" />
    </svg>
);

/* sliver of the window lying behind the reader */
const BackWindow = () => (
    <div className="flex w-2 shrink-0 flex-col border-r border-[#c5dbf5] bg-[#a7c4f0]">
        <div className="h-[18px] rounded-br-sm border-r border-b border-[#555] bg-[#858585]" />
        <div className="h-[7px] bg-[#c5c5c5]" />
        <div className="flex h-7 items-center border-b border-[#d7e9fc] bg-[#a9c5ed]">
            <span className="h-3 w-1 rounded-r-full border border-[#e6f1ff] bg-[#1c4fa3]" />
        </div>
        <div className="h-[105px] rounded-br-sm bg-linear-to-b from-[#c1d9f3] to-[#e2f9ff]" />
        <div className="flex h-[26px] flex-col justify-between py-1">
            <span className="h-px w-1 bg-[#223]" />
            <span className="h-2 w-[5px] border border-[#557] bg-white" />
        </div>
        <div className="flex flex-1 flex-col justify-between bg-linear-to-r from-[#7392c0] to-[#87a5d2] pt-1.5 pb-1.5">
            <Icon w={4} h={4}><path d="M0 0L4 4H0Z" fill="#33466b" /></Icon>
            <Icon w={6} h={12} className="mt-7 mb-auto"><path d="M0 0.500H5.500V11.500H0M0 3.500H4M0 5.500H4M0 7.500H4" stroke="#55698e" fill="#dfe9f8" /></Icon>
            <Icon w={4} h={4}><path d="M0 4L4 0H0Z" fill="#33466b" /></Icon>
        </div>
        <div className="flex h-[59px] flex-col gap-3 pt-2">
            <span className="h-1 w-px bg-black" />
            <span className="h-1 w-0.5 bg-black" />
            <span className="h-1 w-px bg-black" />
        </div>
    </div>
);

/* floating network speed ball */
const SpeedBall = () => (
    <div className="absolute top-[45px] right-[34px] flex items-center drop-shadow-[0_4px_4px_rgba(0,0,0,0.4)]">
        <div className="relative z-10 flex size-12 items-center justify-center rounded-full border-2 border-[#e8e8e8] bg-[#14734c] p-px ring-1 ring-[#aaa]">
            <div className="flex size-full items-center justify-center rounded-full bg-linear-to-b from-[#1a7350] from-28% to-[#4fca63] to-28% pb-1 font-['Liberation_Sans',sans-serif] text-[15px] text-white">
                68%
            </div>
        </div>
        <div className="-ml-6 flex h-[38px] w-[83px] flex-col justify-center rounded-r-full border border-[#aaa] bg-linear-to-b from-[#f4f4f4] to-[#d2d2d2] pr-2 pl-[27px] font-['Open_Sans',sans-serif] text-[10px] leading-[15px] text-[#111]">
            <div className="flex items-center justify-between">
                <Icon w={7} h={8}><path d="M3.500 0L7 3.500H4.500V8H2.500V3.500H0Z" fill="#df553f" /></Icon>
                <span>0K/s</span>
            </div>
            <div className="flex items-center justify-between">
                <Icon w={7} h={8}><path d="M3.500 8L7 4.500H4.500V0H2.500V4.500H0Z" fill="#2f9a58" /></Icon>
                <span>0K/s</span>
            </div>
        </div>
    </div>
);

const App = () => (
    <div className="relative flex h-screen overflow-hidden bg-[#efefef] font-['Noto_Sans_CJK_SC',sans-serif] text-[12px] text-[#222]">
        <BackWindow />
        <div className="flex min-w-0 flex-1 flex-col">
            <TitleBar />
            <MenuBar />
            <Ribbon />
            <DocTabs />
            <main className="flex min-h-0 flex-1">
                <SidePanel />
                <div className="w-1.5 shrink-0 bg-[#ababab] pt-[200px] pl-0.5">
                    <svg width="3" height="44" aria-hidden="true">
                        <path d="M0.500 0V44M2.500 0V44" stroke="#555" strokeDasharray="1 2" />
                    </svg>
                </div>
                <div className="flex min-w-0 flex-1 justify-center overflow-hidden bg-[#ababab]">
                    <PdfPage />
                </div>
                <Scrollbar />
            </main>
            <StatusBar />
            <Taskbar />
        </div>
        <SpeedBall />
    </div>
);

export default App;
